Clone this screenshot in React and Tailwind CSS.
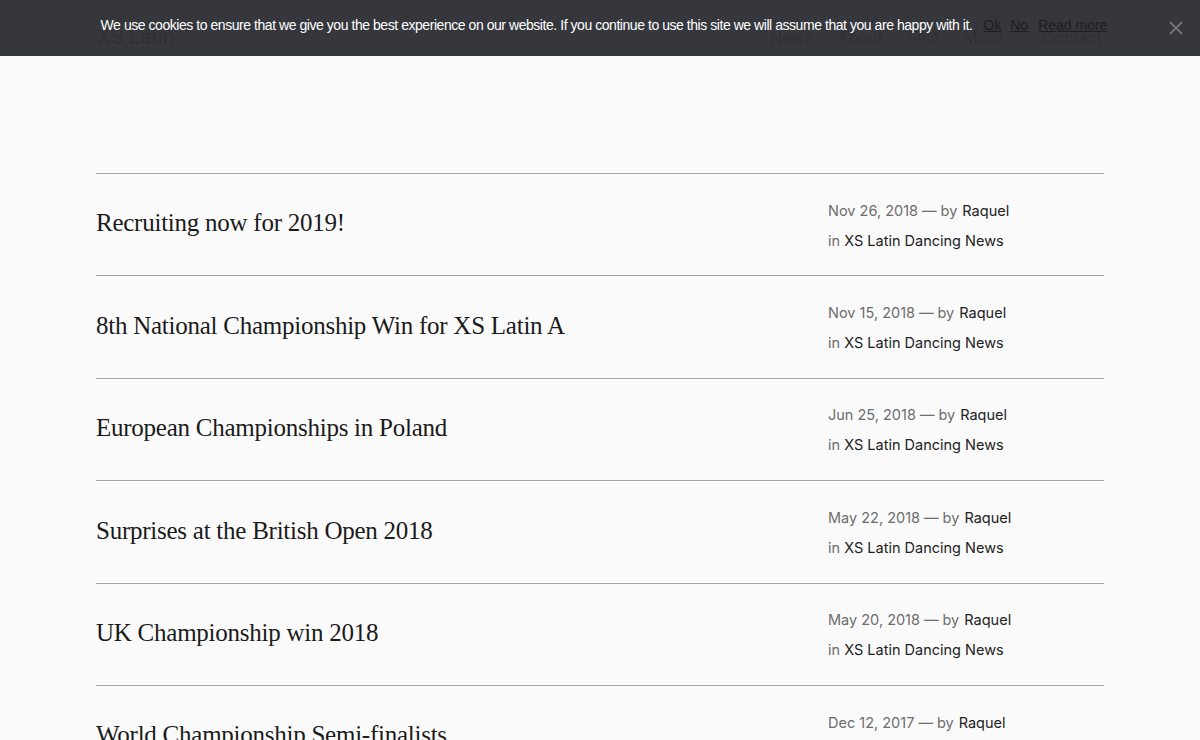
import React from 'react';

const posts = [
  { title: 'Recruiting now for 2019!', date: 'Nov 26, 2018' },
  { title: '8th National Championship Win for XS Latin A', date: 'Nov 15, 2018' },
  { title: 'European Championships in Poland', date: 'Jun 25, 2018' },
  { title: 'Surprises at the British Open 2018', date: 'May 22, 2018' },
  { title: 'UK Championship win 2018', date: 'May 20, 2018' },
  { title: 'World Championship Semi-finalists', date: 'Dec 12, 2017' },
];

const navItems = ['News', 'About', 'FAQ', 'More'];

export default function App() {
  return (
    <div className="relative bg-[#fafafa] text-[#1e1e1e] overflow-hidden h-[740px]">
      {/* Site header (sits under the cookie bar) */}
      <header className="flex items-center justify-between pl-[97px] pr-[98px] pt-[22px] font-['Inter',sans-serif]">
        <div className="text-[20px] text-[#111]">XS Latin</div>
        <nav className="flex items-center text-[16px] text-[#111]">
          <div className="flex gap-[25px]">
            {navItems.map((item) => (
              <span key={item}>{item}</span>
            ))}
          </div>
          <span className="ml-[40px]">Contact</span>
        </nav>
      </header>

      {/* Post list */}
      <main className="px-24 pt-[121px]">
        <ul className="border-t border-[#a3a3a3]">
          {posts.map((post) => (
            <li
              key={post.title}
              className="flex items-center justify-between border-b border-[#a3a3a3] h-[102.4px]"
            >
              <h2 className="font-['Liberation_Serif',serif] text-[25px] text-[#1a1a1a] tracking-[-0.25px] pb-[3px]">
                {post.title}
              </h2>
              <div className="w-[276px] font-['Inter',sans-serif] text-[14.5px] leading-[30px] pt-[2px]">
                <div className="text-[#6d6d6d]">
                  {post.date}
                  <span className="mx-[4px]">—</span>by <span className="ml-[1px] text-[#222]">Raquel</span>
                </div>
                <div className="text-[#6d6d6d]">
                  in <span className="text-[#222]">XS Latin Dancing News</span>
                </div>
              </div>
            </li>
          ))}
        </ul>
      </main>

      {/* Cookie notice */}
      <div className="absolute top-0 left-0 right-0 h-[56px] bg-[#2f3137]/[0.97]">
        <div className="flex justify-center pt-[15px] pl-[8px] font-['Liberation_Sans',Arial,sans-serif] text-[14px]">
          <span className="text-white tracking-[-0.45px]">
            We use cookies to ensure that we give you the best experience on our website. If you continue to use this site we will assume that you are happy with it.
          </span>
          <span className="ml-[11px] text-[#1d1e22] underline">Ok</span>
          <span className="ml-[9px] text-[#1d1e22] underline">No</span>
          <span className="ml-[10px] text-[#1d1e22] underline">Read more</span>
        </div>
        <button className="absolute right-[16px] top-[20px] text-[#6e7076]">
          <svg width="16" height="16" viewBox="0 0 16 16" fill="none" stroke="currentColor" strokeWidth="1.8">
            <path d="M2 2l12 12M14 2L2 14" />
          </svg>
        </button>
      </div>
    </div>
  );
}
